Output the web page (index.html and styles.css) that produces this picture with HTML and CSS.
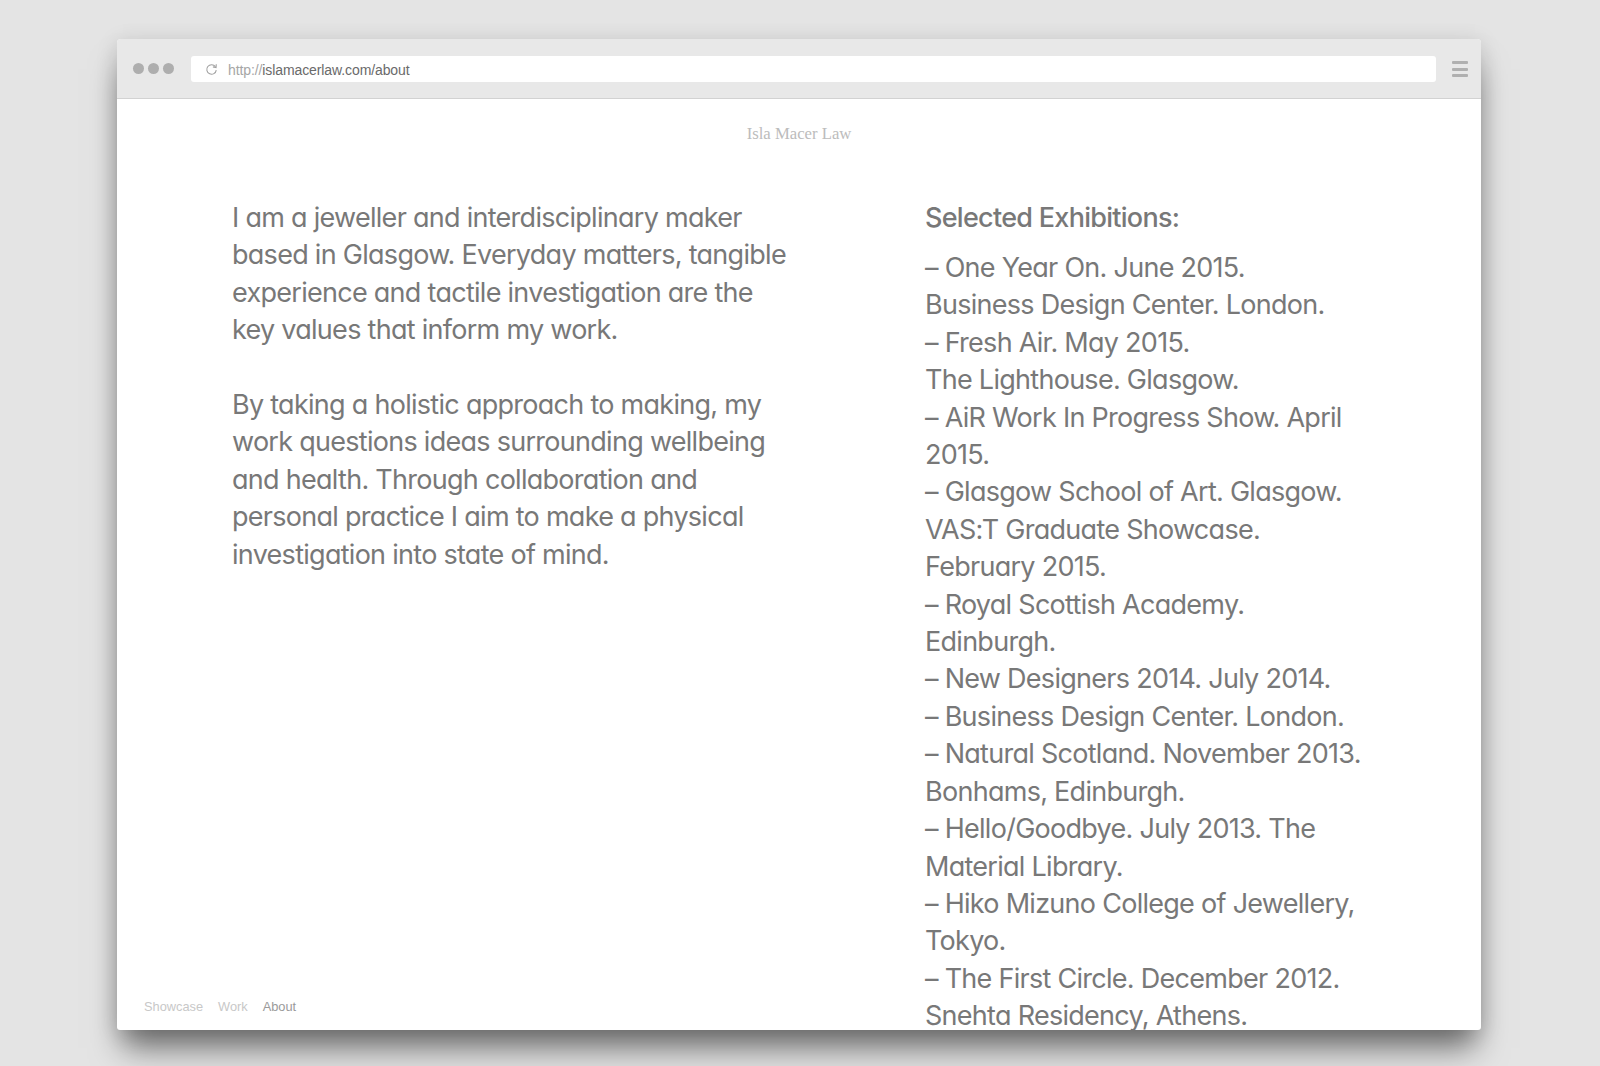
FILE: index.html
```html
<!DOCTYPE html>
<html lang="en">
<head>
<meta charset="utf-8">
<title>Isla Macer Law — About</title>
<link rel="stylesheet" href="styles.css">
</head>
<body>
<div class="stage">
  <div class="window">
    <div class="toolbar">
      <div class="dots"><span></span><span></span><span></span></div>
      <div class="address">
        <svg class="reload" width="13" height="13" viewBox="0 0 12 12" aria-hidden="true">
          <path d="M9.6 3.4 A4.4 4.4 0 1 0 10.4 6.6" fill="none" stroke="#a0a0a0" stroke-width="1"/>
          <path d="M10.4 1.2 L10.2 4.2 L7.3 3.6" fill="none" stroke="#a0a0a0" stroke-width="1"/>
        </svg>
        <span class="url"><span class="proto">http://</span>islamacerlaw.com/about</span>
      </div>
      <div class="menu"><span></span><span></span><span></span></div>
    </div>
    <div class="page">
      <div class="site-title">Isla Macer Law</div>
      <div class="columns">
        <div class="about">
          <p>I am a jeweller and interdisciplinary maker<br>based in Glasgow. Everyday matters, tangible<br>experience and tactile investigation are the<br>key values that inform my work.</p>
          <p>By taking a holistic approach to making, my<br>work questions ideas surrounding wellbeing<br>and health. Through collaboration and<br>personal practice I aim to make a physical<br>investigation into state of mind.</p>
        </div>
        <div class="exhibitions">
          <h2>Selected Exhibitions:</h2>
          <p>– One Year On. June 2015.<br>Business Design Center. London.</p>
          <p>– Fresh Air. May 2015.<br>The Lighthouse. Glasgow.</p>
          <p>– AiR Work In Progress Show. April<br>2015.</p>
          <p>– Glasgow School of Art. Glasgow.<br>VAS:T Graduate Showcase.<br>February 2015.</p>
          <p>– Royal Scottish Academy.<br>Edinburgh.</p>
          <p>– New Designers 2014. July 2014.</p>
          <p>– Business Design Center. London.</p>
          <p>– Natural Scotland. November 2013.<br>Bonhams, Edinburgh.</p>
          <p>– Hello/Goodbye. July 2013. The<br>Material Library.</p>
          <p>– Hiko Mizuno College of Jewellery,<br>Tokyo.</p>
          <p>– The First Circle. December 2012.<br>Snehta Residency, Athens.</p>
        </div>
      </div>
      <nav class="nav">
        <a class="nav-link">Showcase</a>
        <a class="nav-link">Work</a>
        <a class="nav-link current">About</a>
      </nav>
    </div>
  </div>
</div>
</body>
</html>
```
FILE: styles.css
```css
html, body {
  margin: 0;
  padding: 0;
}
body {
  width: 1600px;
  height: 1066px;
  overflow: hidden;
  background: #e4e4e4;
  font-family: "Inter", "Lato", "Liberation Sans", sans-serif;
}
.stage {
  padding: 39px 0 0 117px;
}
.window {
  position: relative;
  width: 1364px;
  height: 991px;
  background: #fff;
  border-radius: 4px 4px 3px 3px;
  overflow: hidden;
  box-shadow: 0 24px 30px -6px rgba(0, 0, 0, 0.5), 0 4px 22px rgba(0, 0, 0, 0.14);
}
.toolbar {
  height: 60px;
  box-sizing: border-box;
  background: #e8e8e8;
  border-bottom: 1px solid #d2d2d2;
  display: flex;
  align-items: center;
  padding: 0 13px 0 16px;
}
.dots {
  display: flex;
  gap: 4px;
}
.dots span {
  width: 11px;
  height: 11px;
  border-radius: 50%;
  background: #aeaeae;
}
.address {
  margin-left: 17px;
  flex: 1;
  height: 26px;
  background: #fff;
  border-radius: 3px;
  display: flex;
  align-items: center;
  padding-left: 14px;
  margin-top: 1px;
}
.reload {
  display: block;
}
.url {
  margin-left: 10px;
  margin-top: 2px;
  font-family: "Liberation Sans", Arial, sans-serif;
  font-size: 14px;
  color: #6a6a6a;
  letter-spacing: -0.1px;
}
.proto {
  color: #a6a6a6;
}
.menu {
  margin-left: 16px;
  display: flex;
  flex-direction: column;
  gap: 3.5px;
  margin-top: 1px;
}
.menu span {
  width: 16px;
  height: 3px;
  background: #b0b0b0;
  border-radius: 1px;
}
.page {
  height: 931px;
  overflow: hidden;
  padding-top: 25px;
  box-sizing: border-box;
}
.site-title {
  text-align: center;
  font-family: "Liberation Serif", "Times New Roman", serif;
  font-size: 16.7px;
  line-height: 20px;
  color: #bcbcbc;
}
.columns {
  margin-top: 55px;
  padding-left: 115px;
  display: grid;
  grid-template-columns: 560px 440px;
  column-gap: 133px;
  font-size: 27px;
  line-height: 37.4px;
  letter-spacing: -0.72px;
  font-weight: 400;
  font-feature-settings: "cv11" 1;
  color: #787878;
  white-space: nowrap;
}
.columns p {
  margin: 0;
}
.about p + p {
  margin-top: 37.4px;
}
.exhibitions h2 {
  margin: 0 0 12.6px;
  font-size: 27px;
  line-height: 37.4px;
  font-weight: 500;
  color: #787878;
}
.nav {
  position: absolute;
  left: 27px;
  bottom: 15px;
  display: flex;
  gap: 15px;
  font-family: "Liberation Sans", Arial, sans-serif;
  font-size: 12.8px;
  line-height: 16px;
}
.nav-link {
  color: #c8c8c8;
}
.nav-link.current {
  color: #9a9a9a;
}
```
